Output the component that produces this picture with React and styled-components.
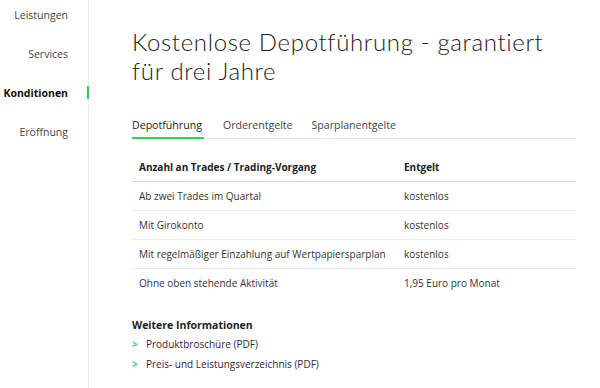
import React from 'react'
import styled, { createGlobalStyle } from 'styled-components'

const GlobalStyle = createGlobalStyle`
  html, body {
    margin: 0;
    padding: 0;
    background: #fff;
  }
  body {
    font-family: 'Open Sans', 'Liberation Sans', sans-serif;
    color: #333;
  }
`

const navItems = ['Leistungen', 'Services', 'Konditionen', 'Eröffnung']

const rows = [
  ['Ab zwei Trades im Quartal', 'kostenlos'],
  ['Mit Girokonto', 'kostenlos'],
  ['Mit regelmäßiger Einzahlung auf Wertpapiersparplan', 'kostenlos'],
  ['Ohne oben stehende Aktivität', '1,95 Euro pro Monat']
]

const App = () => {
  return <Page>
    <GlobalStyle />
    <Sidebar>
      {navItems.map((item) => (
        <NavItem key={item} active={item === 'Konditionen'}>{item}</NavItem>
      ))}
    </Sidebar>
    <Main>
      <Title>Kostenlose Depotführung - garantiert<br />für drei Jahre</Title>
      <Tabs>
        <Tab active>Depotführung</Tab>
        <Tab>Orderentgelte</Tab>
        <Tab>Sparplanentgelte</Tab>
      </Tabs>
      <Table>
        <thead>
          <tr>
            <Th>Anzahl an Trades / Trading-Vorgang</Th>
            <Th>Entgelt</Th>
          </tr>
        </thead>
        <tbody>
          {rows.map(([label, price]) => (
            <tr key={label}>
              <Td>{label}</Td>
              <Td>{price}</Td>
            </tr>
          ))}
        </tbody>
      </Table>
      <InfoTitle>Weitere Informationen</InfoTitle>
      <Links>
        <LinkItem><Chevron>&gt;</Chevron>Produktbroschüre (PDF)</LinkItem>
        <LinkItem><Chevron>&gt;</Chevron>Preis- und Leistungsverzeichnis (PDF)</LinkItem>
      </Links>
    </Main>
  </Page>
}

const Page = styled.div`
  display: flex;
  width: 600px;
  height: 388px;
  overflow: hidden;
`

const Sidebar = styled.nav`
  width: 88px;
  flex-shrink: 0;
  border-right: 1px solid #ebebeb;
  display: flex;
  flex-direction: column;
  align-items: flex-end;
  padding-top: 5px;
  gap: 19px;
`

const NavItem = styled.div`
  position: relative;
  font-size: 10.5px;
  line-height: 20px;
  padding-right: 20px;
  color: ${(p) => (p.active ? '#111' : '#444')};
  font-weight: ${(p) => (p.active ? 700 : 400)};

  &::after {
    content: '';
    display: ${(p) => (p.active ? 'block' : 'none')};
    position: absolute;
    right: -1px;
    top: 3px;
    width: 2px;
    height: 13px;
    background: #2bd35e;
  }
`

const Main = styled.main`
  flex: 1;
  padding: 27px 24px 0 43px;
`

const Title = styled.h1`
  margin: 0;
  font-family: 'Lato', 'Open Sans', sans-serif;
  font-weight: 300;
  font-size: 24px;
  line-height: 29px;
  color: #222;
  letter-spacing: 0.65px;
`

const Tabs = styled.div`
  display: flex;
  gap: 19px;
  margin-top: 32px;
  border-bottom: 1px solid #e6e6e6;
`

const Tab = styled.div`
  font-size: 10.6px;
  line-height: 16px;
  padding-bottom: 4px;
  margin-bottom: -1px;
  color: ${(p) => (p.active ? '#222' : '#444')};
  border-bottom: 2px solid ${(p) => (p.active ? '#2bd35e' : 'transparent')};
  padding-right: ${(p) => (p.active ? '2px' : '0')};
`

const Table = styled.table`
  width: 100%;
  margin-top: 14px;
  border-collapse: collapse;
  font-size: 10px;
`

const Th = styled.th`
  text-align: left;
  font-weight: 700;
  color: #222;
  padding: 7px;
  line-height: 14px;
  border-bottom: 1px solid #d6d6d6;
  &:first-child { width: 251px; }
`

const Td = styled.td`
  padding: 7px;
  line-height: 14px;
  color: #333;
  tr:not(:last-child) > & {
    border-bottom: 1px solid #ebebeb;
  }
`

const InfoTitle = styled.h3`
  margin: 21px 0 0;
  font-size: 10.5px;
  font-weight: 700;
  line-height: 14px;
  color: #222;
`

const Links = styled.ul`
  list-style: none;
  margin: 2px 0 0;
  padding: 0;
`

const LinkItem = styled.li`
  display: flex;
  align-items: center;
  font-size: 10px;
  line-height: 20px;
  color: #3a2143;
`

const Chevron = styled.span`
  color: #2bd35e;
  font-weight: 700;
  width: 14px;
  font-size: 10px;
`

export default App
